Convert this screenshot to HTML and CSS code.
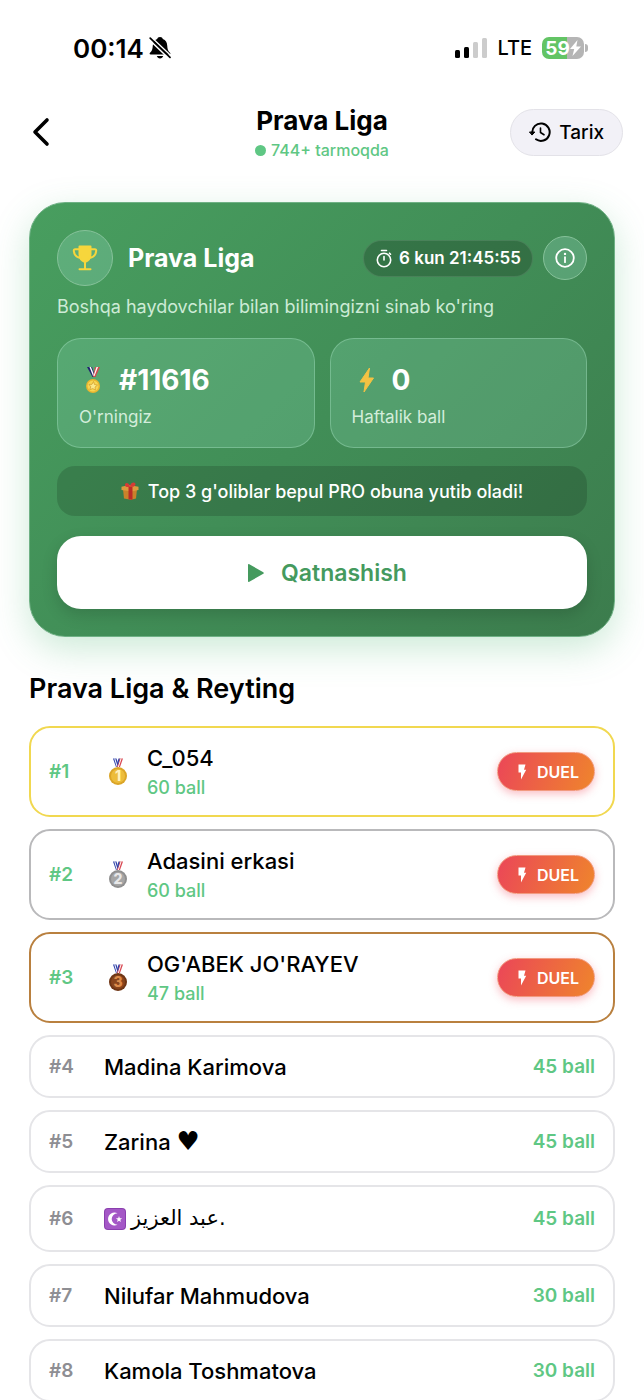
FILE: index.html
```html
<!DOCTYPE html>
<html lang="uz">
<head>
  <meta charset="UTF-8">
  <meta name="viewport" content="width=device-width, initial-scale=1.0">
  <title>Prava Liga</title>
  <link rel="stylesheet" href="styles.css">
</head>
<body>
  <!-- shared icons -->
  <svg class="sprite" aria-hidden="true">
    <symbol id="bolt" viewBox="0 0 12 18">
      <path d="M2.500 1.500h7L8 6.800h2.200L5 16.500V9.500H2.500z" fill="#fff"/>
    </symbol>
    <symbol id="ribbon" viewBox="0 0 20 28">
      <path d="M5 .5h3.500L11 9H8z" fill="#2b3ea8"/>
      <path d="M6.200 .5h1L9.800 9H8.800z" fill="#fff"/>
      <path d="M11.500.5H15L12 9H9z" fill="#d8444e"/>
      <path d="M12.600.5h1L10.800 9H9.800z" fill="#fff"/>
      <path d="M10.500.5h1.300L10 7 9.200 5z" fill="#2b3ea8"/>
    </symbol>
  </svg>

  <div class="status">
    <div class="status-left">
      <span class="time">00:14</span>
      <svg width="22" height="24" viewBox="0 0 22 24">
        <path d="M11 1c1.600 0 2.600.9 2.800 2 3 .9 4.200 3.300 4.400 6.500.2 4 .9 5.500 2.800 7.300.8.900.4 1.700-.7 1.700H1.700c-1.100 0-1.500-.8-.7-1.700 1.900-1.800 2.600-3.300 2.800-7.300C4 6.300 5.200 3.900 8.200 3c.2-1.100 1.200-2 2.800-2z"/>
        <path d="M7.800 20h6.400c-.5 1.500-1.600 2.400-3.200 2.400S8.300 21.500 7.800 20z"/>
        <path d="M2.400 1.200 23 20.600M0 3.400 20 22.600" stroke="#fff" stroke-width="1.500"/>
        <path d="M1.200 2.200 21 21.400" stroke="#000" stroke-width="1.700" stroke-linecap="round"/>
      </svg>
    </div>
    <div class="status-right">
      <svg width="32" height="20" viewBox="0 0 32 20">
        <rect x="0" y="12" width="5" height="8" rx="1.500"/>
        <rect x="9" y="9" width="5" height="11" rx="1.500"/>
        <rect x="18" y="4" width="5" height="16" rx="1.500" fill="#ccc"/>
        <rect x="27" y="0" width="5" height="20" rx="1.500" fill="#ccc"/>
      </svg>
      <span class="network">LTE</span>
      <div class="battery">
        <span>59</span>
        <svg width="11" height="16" viewBox="0 0 11 16"><path d="M7.500 0 0 9h4.200L2.500 16 11 6.500H6.300z" fill="#fff"/></svg>
      </div>
    </div>
  </div>

  <header class="header">
    <a class="back" href="#" aria-label="Orqaga">
      <svg width="18" height="30" viewBox="0 0 18 30" fill="none" stroke="#000" stroke-width="3.600" stroke-linecap="round" stroke-linejoin="round"><path d="M15 3 3 15 15 27"/></svg>
    </a>
    <div class="header-title">
      <h1>Prava Liga</h1>
      <p class="online">744+ tarmoqda</p>
    </div>
    <button class="history">
      <svg width="22" height="22" viewBox="0 0 22 22" fill="none" stroke="#000" stroke-width="2" stroke-linecap="round" stroke-linejoin="round">
        <path d="M3.300 12A8.700 8.700 0 1 1 7 18.300"/>
        <path d="M.8 11h5L3.300 13.800z" fill="#000" stroke-width="1"/>
        <path d="M11.500 7v4.500l3.500 2.200" stroke-width="1.600"/>
      </svg>
      Tarix
    </button>
  </header>

  <main>
    <section class="card">
      <div class="card-top">
        <div class="trophy">
          <svg width="26" height="26" viewBox="0 0 26 26" fill="none" stroke="#f7d63c" stroke-width="2" stroke-linecap="round" stroke-linejoin="round">
            <path d="M7.500 1.500h11v7.500c0 4-1.500 6.500-5.500 8-4-1.500-5.500-4-5.500-8z" fill="#f7d63c"/>
            <path d="M7 4.200H3.200C2.200 4.200 1.700 4.800 1.800 6c.3 3.300 2.200 6.200 6.700 7M19 4.200h3.800c1 0 1.500.6 1.400 1.800-.3 3.300-2.200 6.200-6.700 7M13 16.500V24M7.500 24.200h11"/>
          </svg>
        </div>
        <h2>Prava Liga</h2>
        <div class="timer">
          <svg width="18" height="19" viewBox="0 0 18 19" fill="none" stroke="#fff" stroke-width="1.600" stroke-linecap="round">
            <circle cx="9" cy="11" r="6.700"/><path d="M6.500 1.500h5M9 7.500V11M14.500 4.200l1 1"/>
          </svg>
          6 kun 21:45:55
        </div>
        <button class="info" aria-label="Ma'lumot">
          <svg width="20" height="20" viewBox="0 0 20 20" fill="none" stroke="#fff" stroke-width="1.800">
            <circle cx="10" cy="10" r="8.800"/><path d="M10 9.200v5" stroke-linecap="round"/><circle cx="10" cy="5.900" r="1.200" fill="#fff" stroke="none"/>
          </svg>
        </button>
      </div>
      <p class="desc">Boshqa haydovchilar bilan bilimingizni sinab ko'ring</p>

      <div class="stats">
        <div class="stat">
          <div class="stat-value">
            <svg width="28" height="28" viewBox="0 0 28 28">
              <path d="M8 1h5l3.500 10h-3z" fill="#20246e"/><path d="M10.500 1H12l3.500 9h-1.500z" fill="#fff"/>
              <path d="M16 1h5l-4.500 10H14z" fill="#d14a50"/><path d="M17.500 1H19l-3.500 9h-1z" fill="#fff"/>
              <circle cx="14" cy="20" r="7" fill="#e9b52e"/><circle cx="14" cy="20" r="5.500" fill="#f7d552"/>
              <path d="m14.500 15.500 1 3 3 .6-2.500 2 .4 3-2.600-1.500-3 1 1-2.800-1.800-2.400 3-.1z" fill="#fbe88a" stroke="#c98e1e" stroke-width=".6"/>
            </svg>
            #11616
          </div>
          <div class="stat-label">O'rningiz</div>
        </div>
        <div class="stat">
          <div class="stat-value">
            <svg width="28" height="28" viewBox="0 0 28 28"><path d="M17.500 2 8 16h5.500L12 26 21.500 12H16z" fill="#f3c243" stroke="#f3c243" stroke-linejoin="round"/></svg>
            0
          </div>
          <div class="stat-label">Haftalik ball</div>
        </div>
      </div>

      <div class="prize">
        <svg width="18" height="18" viewBox="0 0 18 18">
          <path d="M2 7h14l-1 9.500-5 1.200L3 16.500z" fill="#c9822b"/>
          <path d="M.5 4.800 8 3l9.500 1.800V8l-7 1.500L.5 8z" fill="#dc9a3e"/>
          <path d="M7.500 4.500h4V17.800l-4-.5z" fill="#b92c28"/>
          <path d="M9 4.500C6 6 3.500 4.500 4 2.200 5 0 8 1 9 4 10-.2 14-.2 14.500 2c.2 2-2.500 3.500-5.500 2.500z" fill="#d53b35"/>
        </svg>
        Top 3 g'oliblar bepul PRO obuna yutib oladi!
      </div>

      <button class="join">
        <svg width="18" height="20" viewBox="0 0 18 20"><path d="M1 1.800v16.400c0 .8.700 1 1.300.6l14-8c.7-.5.7-1.100 0-1.600l-14-8C1.700.8 1 1 1 1.800z" fill="#459a5e"/></svg>
        Qatnashish
      </button>
    </section>

    <section class="rating">
      <h2>Prava Liga &amp; Reyting</h2>
      <ol class="list">
        <li class="row row-top gold">
          <span class="rank">#1</span>
          <svg class="medal" width="20" height="28" viewBox="0 0 20 28">
            <use href="#ribbon"/><circle cx="10" cy="18" r="9" fill="#dba527"/><circle cx="10" cy="18" r="7" fill="#edbd3b"/>
            <text x="10" y="23" text-anchor="middle" fill="#fff2bd">1</text>
          </svg>
          <div class="player"><span class="name">C_054</span><span class="score">60 ball</span></div>
          <button class="duel"><svg width="12" height="18"><use href="#bolt"/></svg>DUEL</button>
        </li>
        <li class="row row-top silver">
          <span class="rank">#2</span>
          <svg class="medal" width="20" height="28" viewBox="0 0 20 28">
            <use href="#ribbon"/><circle cx="10" cy="18" r="9" fill="#8f8f8f"/><circle cx="10" cy="18" r="7" fill="#a6a6a6"/>
            <text x="10" y="23" text-anchor="middle" fill="#e8e8e8">2</text>
          </svg>
          <div class="player"><span class="name">Adasini erkasi</span><span class="score">60 ball</span></div>
          <button class="duel"><svg width="12" height="18"><use href="#bolt"/></svg>DUEL</button>
        </li>
        <li class="row row-top bronze">
          <span class="rank">#3</span>
          <svg class="medal" width="20" height="28" viewBox="0 0 20 28">
            <use href="#ribbon"/><circle cx="10" cy="18" r="9" fill="#6f3514"/><circle cx="10" cy="18" r="7" fill="#8a451c"/>
            <text x="10" y="23" text-anchor="middle" fill="#dd8c4b">3</text>
          </svg>
          <div class="player"><span class="name">OG'ABEK JO'RAYEV</span><span class="score">47 ball</span></div>
          <button class="duel"><svg width="12" height="18"><use href="#bolt"/></svg>DUEL</button>
        </li>
        <li class="row"><span class="rank">#4</span><span class="name">Madina Karimova</span><span class="points">45 ball</span></li>
        <li class="row"><span class="rank">#5</span><span class="name">Zarina <span class="heart">♥</span></span><span class="points">45 ball</span></li>
        <li class="row">
          <span class="rank">#6</span>
          <span class="name name-ar">
            <svg width="22" height="22" viewBox="0 0 22 22">
              <rect width="22" height="22" rx="4" fill="#8a3fae"/><rect x="1" y="1" width="20" height="20" rx="3" fill="#a457c6"/>
              <path d="M13.500 5.200a6.500 6.500 0 1 0 0 11.600 5.800 5.800 0 1 1 0-11.600z" fill="#fff"/>
              <path d="m15 8 .8 2.200 2.300.1-1.800 1.400.6 2.200-1.900-1.200-1.900 1.200.6-2.200-1.800-1.400 2.300-.1z" fill="#fff"/>
            </svg>
            <span>عبد العزيز.</span>
          </span>
          <span class="points">45 ball</span>
        </li>
        <li class="row"><span class="rank">#7</span><span class="name">Nilufar Mahmudova</span><span class="points">30 ball</span></li>
        <li class="row"><span class="rank">#8</span><span class="name">Kamola Toshmatova</span><span class="points">30 ball</span></li>
      </ol>
    </section>
  </main>
</body>
</html>
```
FILE: styles.css
```css
* {
  box-sizing: border-box;
}
body {
  margin: 0;
  font-family: "Inter", "DejaVu Sans", sans-serif;
  background: #fff;
  color: #000;
}
h1, h2, p, ol {
  margin: 0;
  padding: 0;
}
button {
  font-family: inherit;
  cursor: pointer;
}
svg {
  flex-shrink: 0;
}
.sprite {
  display: none;
}

/* status bar */
.status {
  display: flex;
  justify-content: space-between;
  align-items: center;
  height: 96px;
  padding: 0 56px 0 73px;
}
.status-left, .status-right {
  display: flex;
  align-items: center;
}
.status-left {
  gap: 5px;
}
.status-right {
  gap: 10px;
}
.time {
  font-size: 26px;
  font-weight: 600;
}
.network {
  font-size: 20px;
  font-weight: 500;
}
.battery {
  position: relative;
  display: flex;
  align-items: center;
  justify-content: center;
  width: 42px;
  height: 22px;
  margin-right: 4px;
  border-radius: 7px;
  background: linear-gradient(90deg, #63c465 59%, #b5b5b5 59%);
  color: #fff;
  font-size: 19px;
  font-weight: 700;
}
.battery::after {
  content: "";
  position: absolute;
  right: -4px;
  top: 7px;
  width: 3px;
  height: 8px;
  border-radius: 0 3px 3px 0;
  background: #b5b5b5;
}

/* header */
.header {
  display: grid;
  grid-template-columns: 1fr auto 1fr;
  align-items: center;
  height: 72px;
  padding: 0 21px 0 32px;
}
.back {
  display: flex;
}
.header-title {
  margin-right: 11px;
  padding-top: 4px;
  text-align: center;
}
.header h1 {
  font-size: 26px;
  line-height: 32px;
  font-weight: 700;
}
.online {
  display: flex;
  align-items: center;
  justify-content: center;
  gap: 5px;
  font-size: 16px;
  line-height: 26px;
  font-weight: 500;
  color: #5fc784;
}
.online::before {
  content: "";
  width: 11px;
  height: 11px;
  border-radius: 50%;
  background: #5fc784;
}
.history {
  display: flex;
  align-items: center;
  justify-self: end;
  gap: 8px;
  height: 47px;
  padding: 0 18px;
  border: 1px solid #e3e2e8;
  border-radius: 24px;
  background: #f2f1f7;
  color: #000;
  font-size: 19px;
  font-weight: 500;
}

main {
  padding: 34px 29px 0;
}

/* league card */
.card {
  padding: 27px;
  border: 1px solid #6fb185;
  border-radius: 36px;
  background: linear-gradient(135deg, #489e5f 0%, #418e57 50%, #3c7c4d 100%);
  box-shadow: 0 12px 36px rgba(72, 180, 110, 0.28);
  color: #fff;
}
.card-top {
  display: flex;
  align-items: center;
  gap: 10px;
}
.card-top h2 {
  flex: 1;
  margin-left: 5px;
  font-size: 25px;
  font-weight: 700;
}
.trophy, .info {
  display: flex;
  align-items: center;
  justify-content: center;
  padding: 0;
  border: 1px solid #86c29a;
  border-radius: 50%;
  background: rgba(150, 215, 190, 0.3);
}
.trophy {
  width: 56px;
  height: 56px;
}
.info {
  width: 44px;
  height: 44px;
}
.timer {
  display: flex;
  align-items: center;
  gap: 6px;
  height: 37px;
  padding: 0 11px;
  border: 1px solid rgba(255, 255, 255, 0.1);
  border-radius: 19px;
  background: rgba(0, 0, 0, 0.2);
  font-size: 17px;
  font-weight: 600;
}
.desc {
  margin-top: 9px;
  font-size: 18px;
  line-height: 24px;
  color: #cdebd6;
}
.stats {
  display: grid;
  grid-template-columns: 1fr 1fr;
  gap: 15px;
  margin-top: 19px;
}
.stat {
  padding: 22px 21px 18px;
  border: 1px solid rgba(180, 235, 205, 0.35);
  border-radius: 24px;
  background: rgba(140, 215, 180, 0.25);
}
.stat-value {
  display: flex;
  align-items: center;
  gap: 12px;
  font-size: 28px;
  line-height: 38px;
  font-weight: 700;
}
.stat-label {
  margin-top: 6px;
  font-size: 17px;
  line-height: 24px;
  color: #d3eddb;
}
.prize {
  display: flex;
  align-items: center;
  justify-content: center;
  gap: 9px;
  height: 50px;
  margin-top: 18px;
  border-radius: 18px;
  background: rgba(0, 0, 0, 0.15);
  font-size: 18px;
  font-weight: 500;
}
.join {
  display: flex;
  align-items: center;
  justify-content: center;
  gap: 16px;
  width: 100%;
  height: 73px;
  margin-top: 20px;
  padding: 0 0 0 10px;
  border: 0;
  border-radius: 24px;
  background: #fff;
  box-shadow: 0 6px 16px rgba(0, 0, 0, 0.15);
  color: #459a5e;
  font-size: 23px;
  font-weight: 600;
}

/* rating */
.rating h2 {
  margin: 36px 0 21px;
  font-size: 27px;
  line-height: 32px;
  font-weight: 600;
}
.list {
  display: flex;
  flex-direction: column;
  gap: 12px;
  list-style: none;
}
.row {
  display: flex;
  align-items: center;
  min-height: 63px;
  padding: 0 18px;
  border: 2px solid #e5e5e8;
  border-radius: 21px;
}
.row-top {
  min-height: 91px;
}
.gold { border-color: #f1d850; }
.silver { border-color: #b9b9bb; }
.bronze { border-color: #b9803f; }
.rank {
  width: 55px;
  font-size: 19px;
  font-weight: 600;
  color: #8e8e93;
}
.row-top .rank {
  color: #5fc784;
}
.medal {
  margin: 0 19px 0 4px;
}
.medal text {
  font-size: 14px;
  font-weight: 800;
}
.player {
  display: flex;
  flex-direction: column;
  gap: 4px;
}
.name {
  font-size: 22px;
  line-height: 28px;
  font-weight: 500;
}
.heart {
  font-family: "DejaVu Sans", sans-serif;
  font-size: 26px;
}
.name-ar {
  display: flex;
  align-items: center;
  gap: 5px;
  font-size: 21px;
  line-height: 63px;
  font-family: "DejaVu Sans", sans-serif;
}
.score {
  font-size: 18px;
  line-height: 24px;
  font-weight: 500;
  color: #5fc784;
}
.points {
  margin-left: auto;
  font-size: 19px;
  font-weight: 600;
  color: #5fc784;
}
.duel {
  display: flex;
  align-items: center;
  gap: 9px;
  height: 39px;
  margin-left: auto;
  padding: 0 15px 0 18px;
  border: 1px solid #f19a80;
  border-radius: 20px;
  background: linear-gradient(110deg, #eb4658, #ef852c);
  box-shadow: 0 3px 9px rgba(240, 70, 90, 0.35);
  color: #fff;
  font-size: 16px;
  font-weight: 600;
}
```
